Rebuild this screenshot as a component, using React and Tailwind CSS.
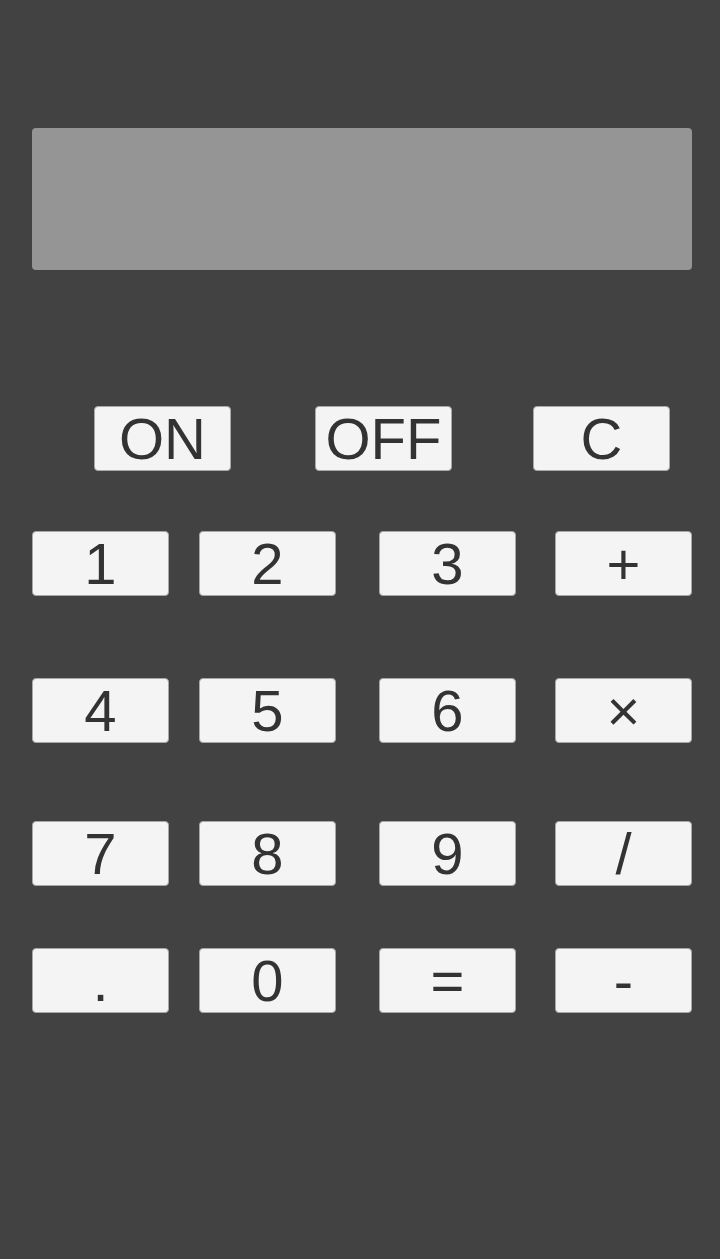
import React from "react";

const font = { fontFamily: '"Liberation Sans", Arial, sans-serif' };

function Key({ label, className = "" }) {
  return (
    <div
      className={`w-[137px] h-[65px] shrink-0 rounded-[4px] border border-[#a8a8a8] bg-[#f4f4f4] flex items-center justify-center text-[58px] leading-none text-[#333333] ${className}`}
    >
      <span>{label}</span>
    </div>
  );
}

export default function App() {
  return (
    <div className="w-[720px] h-[1259px] bg-[#424242] flex flex-col" style={font}>
      <div className="mt-[128px] ml-[32px] w-[660px] h-[142px] rounded-[4px] bg-[#959595]" />
      <div className="mt-[136px] flex">
        <Key label="ON" className="ml-[94px]" />
        <Key label="OFF" className="ml-[84px]" />
        <Key label="C" className="ml-[81px]" />
      </div>
      <div className="mt-[60px] flex">
        <Key label="1" className="ml-[32px]" />
        <Key label="2" className="ml-[30px]" />
        <Key label="3" className="ml-[43px]" />
        <Key label="+" className="ml-[39px]" />
      </div>
      <div className="mt-[82px] flex">
        <Key label="4" className="ml-[32px]" />
        <Key label="5" className="ml-[30px]" />
        <Key label="6" className="ml-[43px]" />
        <Key label="×" className="ml-[39px]" />
      </div>
      <div className="mt-[78px] flex">
        <Key label="7" className="ml-[32px]" />
        <Key label="8" className="ml-[30px]" />
        <Key label="9" className="ml-[43px]" />
        <Key label="/" className="ml-[39px]" />
      </div>
      <div className="mt-[62px] flex">
        <Key label="." className="ml-[32px]" />
        <Key label="0" className="ml-[30px]" />
        <Key label="=" className="ml-[43px]" />
        <Key label="-" className="ml-[39px]" />
      </div>
    </div>
  );
}
